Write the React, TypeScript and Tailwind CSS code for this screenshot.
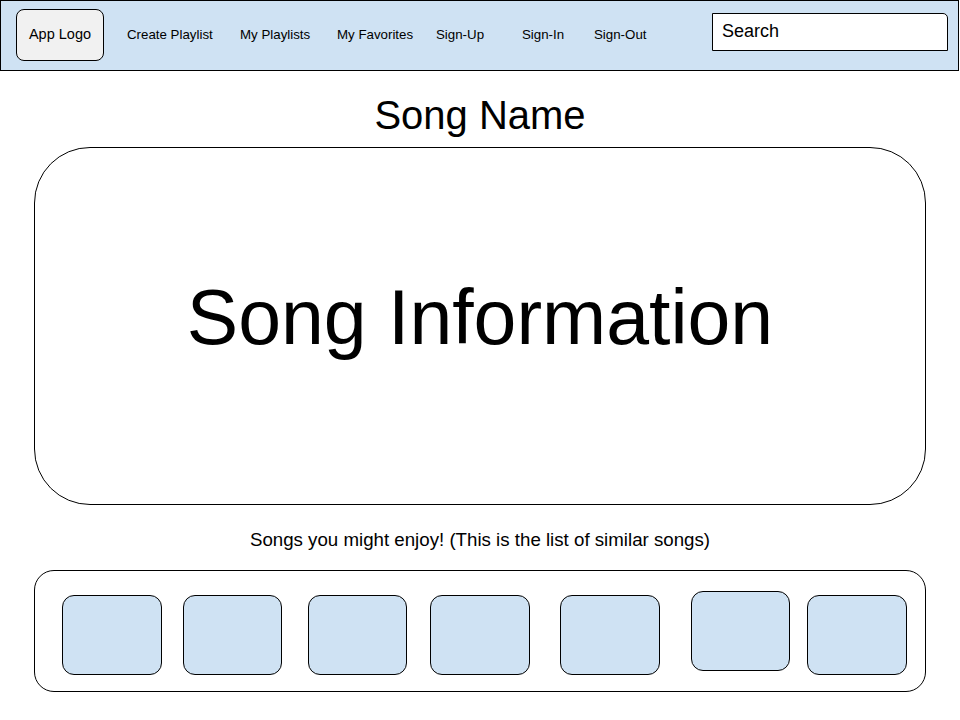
import React from "react";

const nav = [
  { label: "Create Playlist", w: "w-[113px]" },
  { label: "My Playlists", w: "w-[97px]" },
  { label: "My Favorites", w: "w-[99px]" },
  { label: "Sign-Up", w: "w-[86px]" },
  { label: "Sign-In", w: "w-[72px]" },
  { label: "Sign-Out", w: "w-[60px]" },
];

const tiles = [
  { cls: "ml-[27px] mt-[24px] w-[100px]" },
  { cls: "ml-[21px] mt-[24px] w-[99px]" },
  { cls: "ml-[26px] mt-[24px] w-[99px]" },
  { cls: "ml-[23px] mt-[24px] w-[100px]" },
  { cls: "ml-[30px] mt-[24px] w-[100px]" },
  { cls: "ml-[31px] mt-[20px] w-[99px]" },
  { cls: "ml-[17px] mt-[24px] w-[100px]" },
];

export default function App() {
  return (
    <div
      className="w-[960px] h-[720px] bg-white text-black overflow-hidden"
      style={{ fontFamily: '"Liberation Sans", Arial, sans-serif' }}
    >
      <header className="h-[71px] w-[959px] border border-black bg-[#cfe2f3] flex items-start">
        <div className="ml-[15px] mt-[8px] w-[88px] h-[52px] rounded-[8px] border border-black bg-[#f1f1f1] flex items-center justify-center text-[14.5px]">
          App Logo
        </div>
        <nav className="ml-[23px] flex items-center h-[68px]">
          {nav.map((n) => (
            <span key={n.label} className={`${n.w} shrink-0 whitespace-nowrap text-[13.3px] leading-none`}>
              {n.label}
            </span>
          ))}
        </nav>
        <div className="ml-auto mr-[10px] mt-[12px] w-[236px] h-[38px] border border-black bg-white rounded-tr-[5px] flex items-start pl-[9px] pt-[8px] text-[18px] leading-none">
          Search
        </div>
      </header>

      <h1 className="mt-[24px] text-center text-[40px] leading-none">Song Name</h1>

      <section className="mt-[12px] ml-[34px] w-[892px] h-[358px] rounded-[56px] border border-black flex items-center justify-center pb-[18px]">
        <span className="text-[77px] leading-none">Song Information</span>
      </section>

      <p className="mt-[26px] text-center text-[18.7px] leading-none">
        Songs you might enjoy! (This is the list of similar songs)
      </p>

      <section className="mt-[20px] ml-[34px] w-[892px] h-[122px] rounded-[20px] border border-black flex items-start">
        {tiles.map((t, i) => (
          <div
            key={i}
            className={`${t.cls} h-[80px] shrink-0 rounded-[12px] border border-black bg-[#cfe2f3]`}
          />
        ))}
      </section>
    </div>
  );
}
